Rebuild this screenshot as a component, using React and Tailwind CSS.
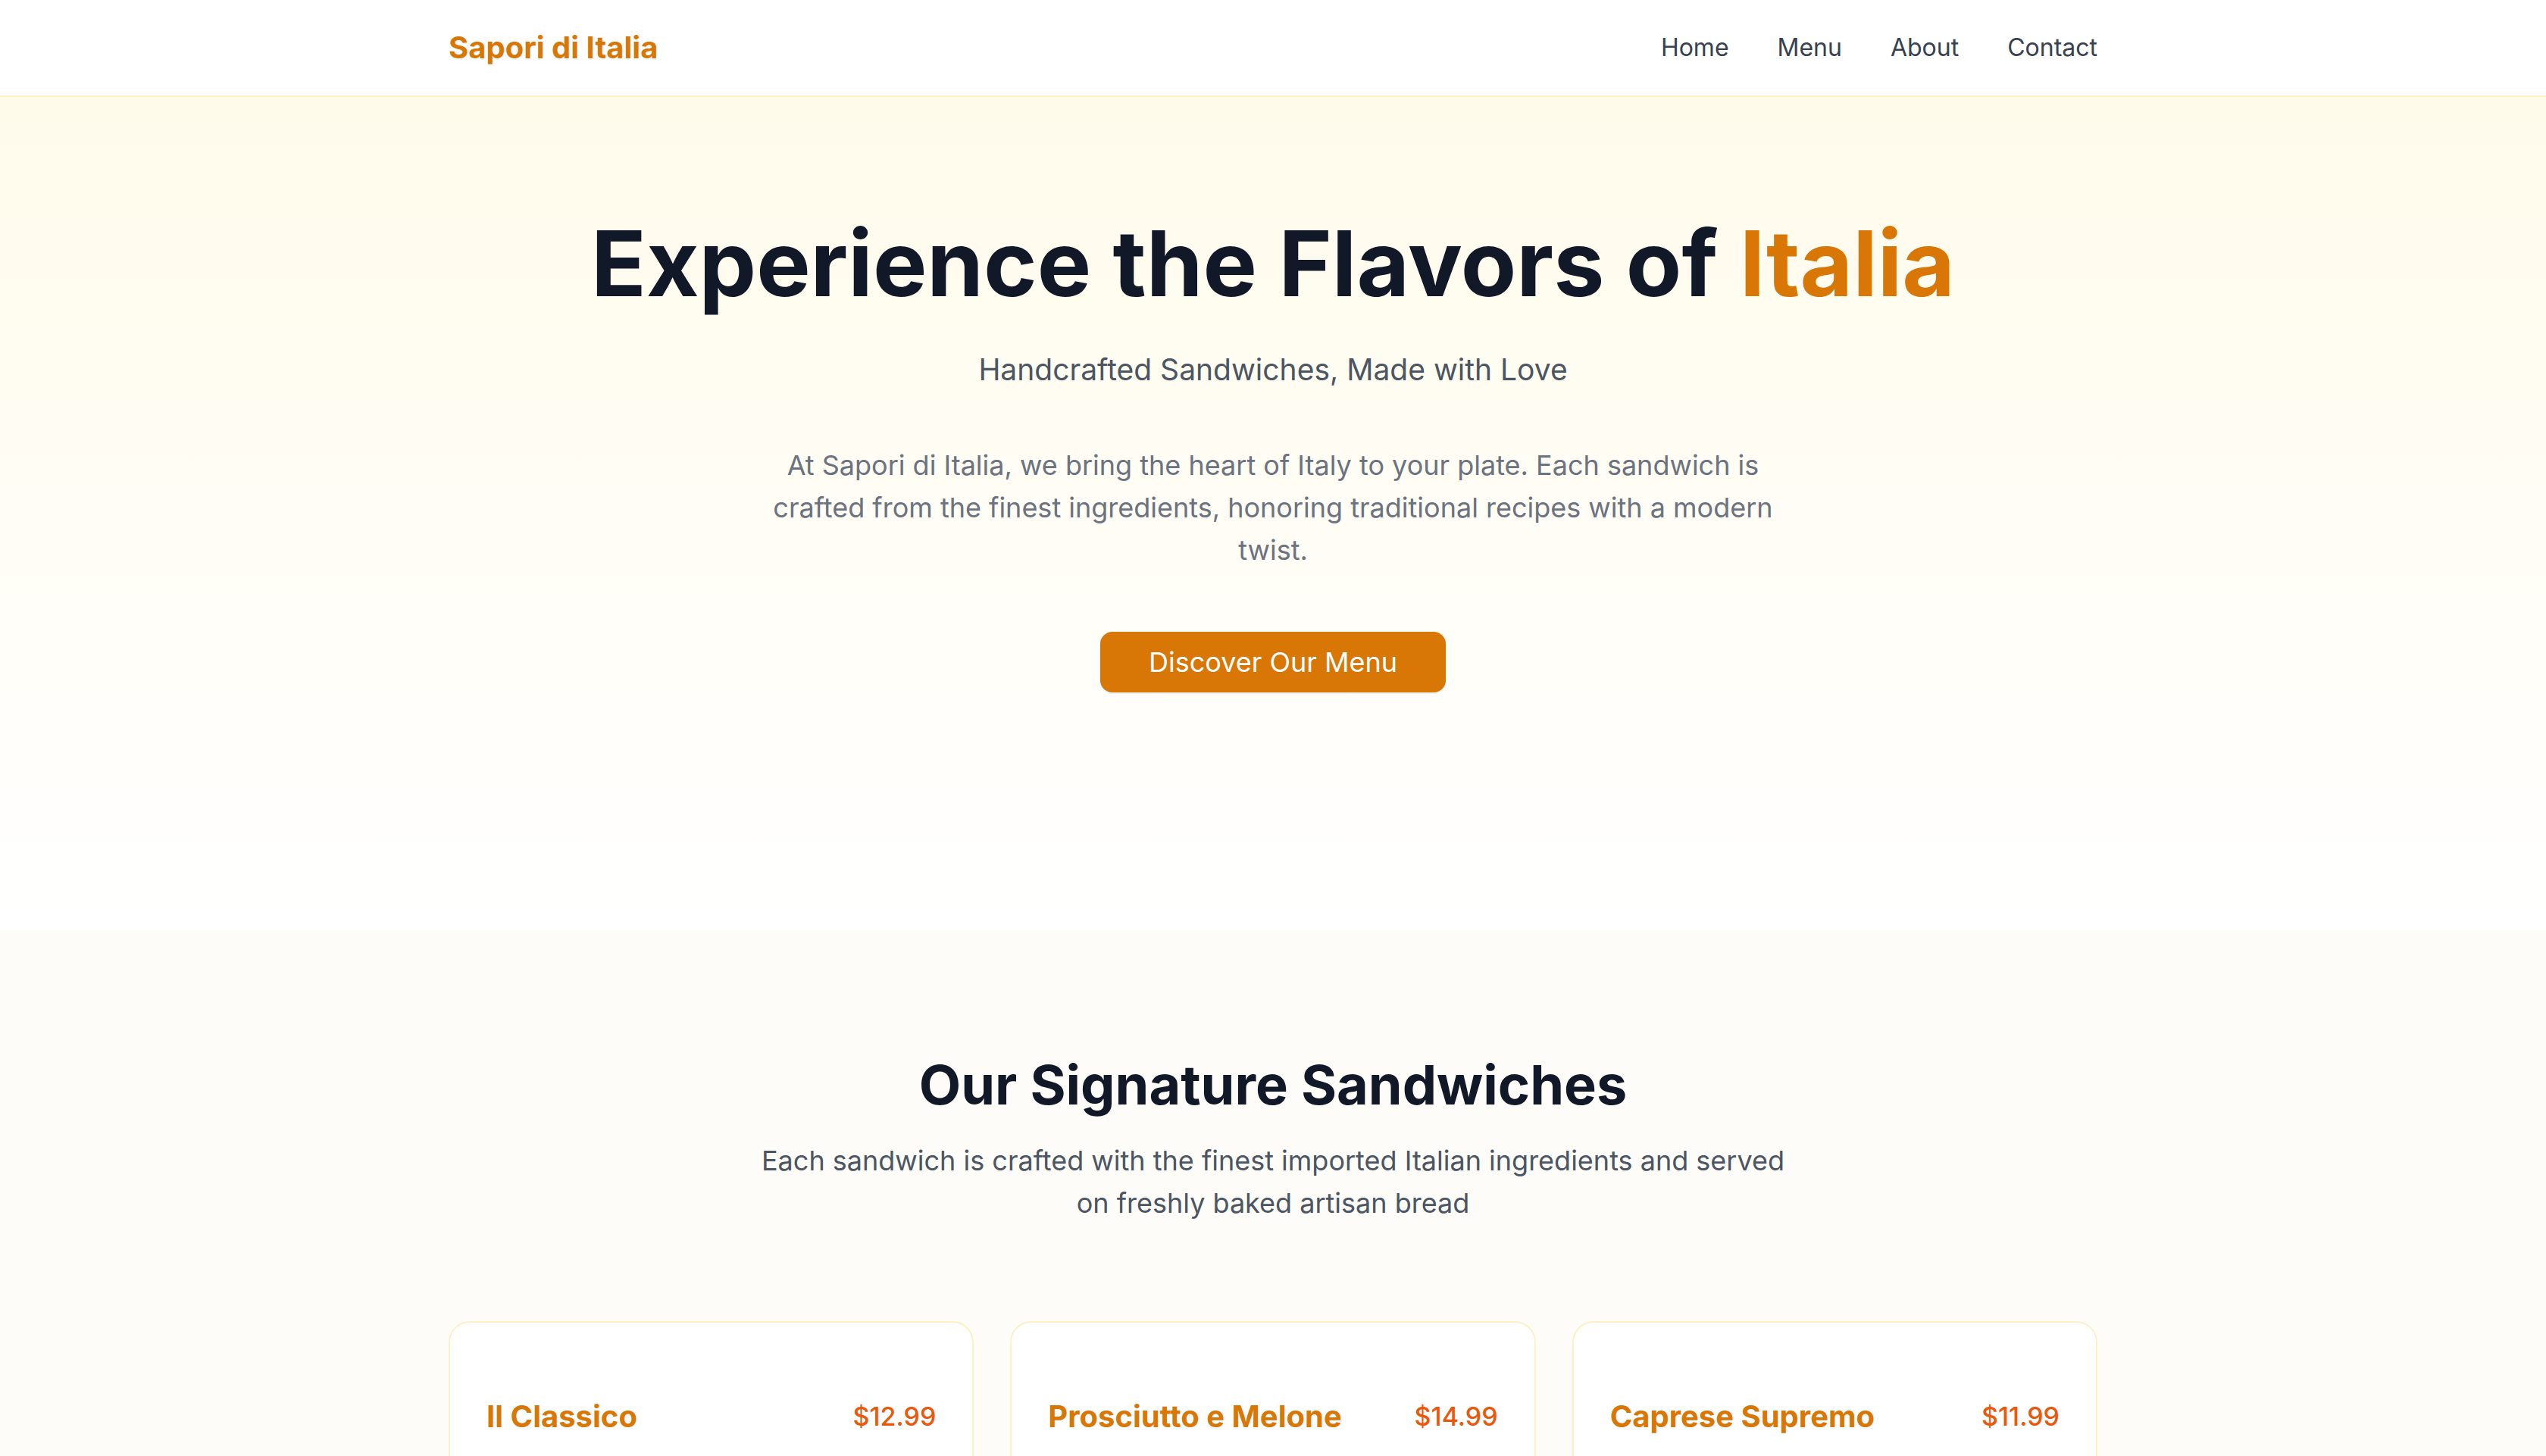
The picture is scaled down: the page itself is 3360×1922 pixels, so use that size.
import React from "react";

const items = [
  { name: "Il Classico", price: "$12.99" },
  { name: "Prosciutto e Melone", price: "$14.99" },
  { name: "Caprese Supremo", price: "$11.99" },
];

export default function App() {
  return (
    <div className="min-h-screen bg-white font-['Inter','Noto_Sans',sans-serif]">
      <nav className="h-32 bg-white border-b-2 border-[#fef3c7]">
        <div className="max-w-[2304px] mx-auto px-16 h-full flex items-center justify-between">
          <a className="text-[40px] leading-[56px] font-bold text-[#d97706]">Sapori di Italia</a>
          <div className="flex items-center gap-16 text-[32px] leading-[48px] text-[#374151]">
            <a>Home</a>
            <a>Menu</a>
            <a>About</a>
            <a>Contact</a>
          </div>
        </div>
      </nav>

      <section className="bg-gradient-to-b from-[#fffbeb] to-white pt-40 pb-[314px]">
        <div className="max-w-[2304px] mx-auto px-16 flex flex-col items-center text-center">
          <h1 className="text-[120px] leading-none font-bold text-[#111827] mb-[52px]">
            Experience the Flavors of <span className="text-[#d97706]">Italia</span>
          </h1>
          <p className="text-[39px] leading-[56px] text-[#4b5563] mb-[70px]">Handcrafted Sandwiches, Made with Love</p>
          <p className="text-[36px] leading-[56px] text-[#6b7280] max-w-[1344px] mb-20">
            At Sapori di Italia, we bring the heart of Italy to your plate. Each sandwich is crafted from the finest ingredients, honoring traditional recipes with a modern twist.
          </p>
          <button className="bg-[#d97706] text-white text-[36px] leading-[56px] px-16 py-3 rounded-2xl shadow-sm">
            Discover Our Menu
          </button>
        </div>
      </section>

      <section className="bg-[#fdfcf8] pt-[164px] pb-40">
        <div className="max-w-[2304px] mx-auto px-16">
          <div className="text-center mb-32">
            <h2 className="text-[72px] leading-[80px] font-bold text-[#111827] mb-8">Our Signature Sandwiches</h2>
            <p className="text-[36px] leading-[56px] text-[#4b5563] max-w-[1400px] mx-auto">
              Each sandwich is crafted with the finest imported Italian ingredients and served on freshly baked artisan bread
            </p>
          </div>
          <div className="grid grid-cols-3 gap-12">
            {items.map((it) => (
              <div key={it.name} className="bg-white border-2 border-[#fdf0c8] rounded-[28px] p-12 h-[640px]">
                <div className="h-12" />
                <div className="flex items-center justify-between">
                  <h3 className="text-[40px] leading-[56px] font-bold text-[#d97706]">{it.name}</h3>
                  <span className="text-[34px] leading-[56px] font-medium text-[#ea580c]">{it.price}</span>
                </div>
              </div>
            ))}
          </div>
        </div>
      </section>
    </div>
  );
}
